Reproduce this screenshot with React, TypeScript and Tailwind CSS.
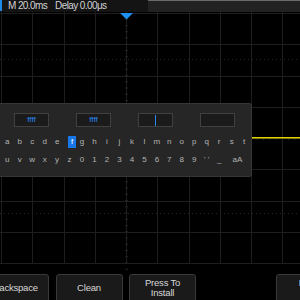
import React from "react";

const row1 = ["a","b","c","d","e","f","g","h","i","j","k","l","m","n","o","p","q","r","s","t"];
const row2 = ["u","v","w","x","y","z","0","1","2","3","4","5","6","7","8","9","' '","_","aA"];

function Grid() {
  const xs = Array.from({ length: 10 }, (_, i) => Math.round(1 + 31.25 * i) + 0.5);
  const ys = Array.from({ length: 9 }, (_, j) => Math.round(1 + 31.25 * j) + 0.5);
  const ticksY = Array.from({ length: 42 }, (_, k) => 1 + k * 6.25);
  const ticksX = Array.from({ length: 48 }, (_, k) => 1 + k * 6.25);
  return (
    <svg width="300" height="262" viewBox="0 0 300 262" className="absolute left-0 top-0">
      {xs.map((x) => (
        <line key={"v" + x} x1={x} y1={0} x2={x} y2={251.5} stroke="#1e1e1e" strokeWidth={1} />
      ))}
      {ys.map((y) => (
        <line key={"h" + y} x1={0} y1={y} x2={300} y2={y} stroke="#1e1e1e" strokeWidth={1} />
      ))}
      <line x1={0} y1={47.5} x2={300} y2={47.5} stroke="#262626" strokeDasharray="1 3" />
      <line x1={0} y1={201.5} x2={300} y2={201.5} stroke="#262626" strokeDasharray="1 3" />
      {ticksY.map((t) => (
        <line key={"ty" + t} x1={125} y1={t} x2={128} y2={t} stroke="#222" />
      ))}
      {ticksX.map((t) => (
        <line key={"tx" + t} x1={t} y1={125} x2={t} y2={128} stroke="#222" />
      ))}
      <line x1={0} y1={125.75} x2={300} y2={125.75} stroke="#ddd200" strokeWidth={1.6} />
      <polygon points="120,1 133,1 126.5,7.5" fill="#1e8ef0" />
    </svg>
  );
}

function Key({ k, active }: { k: string; active?: boolean }) {
  return (
    <div className="w-[12.47px] h-[12px] flex items-center justify-center shrink-0">
      <span
        className={
          active
            ? "w-[12px] h-[12px] flex items-center justify-center bg-[#1877e8] text-white ml-[5px]"
            : "text-[#b4b4b4] whitespace-nowrap"
        }
      >
        {k}
      </span>
    </div>
  );
}

export default function App() {
  return (
    <div
      className="w-[300px] h-[300px] bg-black overflow-hidden flex flex-col"
      style={{ fontFamily: '"Liberation Sans", Arial, sans-serif' }}
    >
      {/* top bar */}
      <div className="h-[12px] flex shrink-0">
        <div className="w-[148px] h-full bg-[#141414] flex items-center">
          <div className="w-[2px] h-[11px] self-start bg-[#1e88e5]" />
          <span className="ml-[6px] text-[10px] leading-none text-[#d2d2d2] tracking-[-0.6px]">M 20.0ms</span>
          <span className="ml-[8px] text-[10px] leading-none text-[#d2d2d2] tracking-[-0.6px]">Delay 0.00μs</span>
        </div>
        <div className="flex-1 h-full bg-[#222] border-t border-[#6a6a6a]" />
      </div>

      {/* screen */}
      <div className="relative h-[262px] shrink-0">
        <Grid />
        {/* keyboard panel */}
        <div className="absolute left-0 top-[91px] w-[252px] h-[74px] bg-[#262626] border border-l-0 border-[#363636] rounded-r-[3px] flex flex-col">
          <div className="flex gap-[27px] pl-[14px] pt-[9px]">
            {[0, 1, 2, 3].map((i) => (
              <div
                key={i}
                className="w-[35px] h-[14px] bg-[#1b1b1b] border border-[#404040] flex items-center justify-center text-[8px] text-[#2a86f0] leading-none"
              >
                {i < 2 ? "ffff" : i === 2 ? <div className="w-[1.5px] h-[11px] bg-[#2a86f0]" /> : null}
              </div>
            ))}
          </div>
          <div className="flex pl-[1px] mt-[9px] text-[8px] leading-none">
            {row1.map((k) => (
              <Key key={k} k={k} active={k === "f"} />
            ))}
          </div>
          <div className="flex pl-[1px] mt-[6px] text-[8px] leading-none">
            {row2.map((k) =>
              k === "aA" ? (
                <div key={k} className="w-[24px] h-[12px] flex items-center justify-center text-[#b4b4b4] shrink-0">
                  aA
                </div>
              ) : (
                <Key key={k} k={k} />
              )
            )}
          </div>
        </div>
      </div>

      {/* bottom soft keys */}
      <div className="flex gap-[6.5px] ml-[-18px] shrink-0">
        {[
          ["Backspace"],
          ["Clean"],
          ["Press To", "Install"],
          null,
          ["Enter", "Exit"],
        ].map((lbl, i) =>
          lbl ? (
            <div
              key={i}
              className="w-[67px] h-[30px] shrink-0 bg-[#1a1a1a] border border-[#3a3a3a] rounded-[3px] flex flex-col items-center pt-[1px]"
            >
              <div className="h-[23px] flex flex-col items-center justify-center text-[9.5px] leading-[10px] text-[#d8d8d8] tracking-[-0.2px]">
                {lbl.map((l) => (
                  <span key={l}>{l}</span>
                ))}
              </div>
            </div>
          ) : (
            <div key={i} className="w-[67px] shrink-0" />
          )
        )}
      </div>
    </div>
  );
}
